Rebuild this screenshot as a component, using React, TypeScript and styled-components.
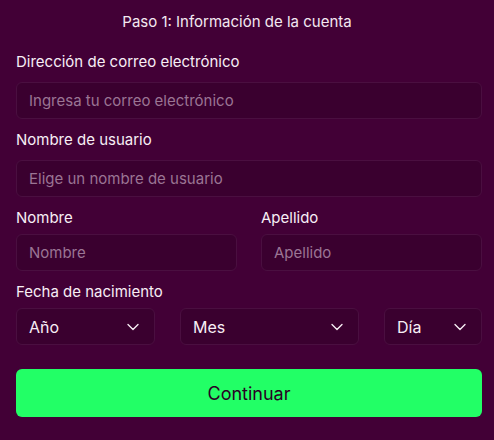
import React, { FC } from 'react'
import styled, { createGlobalStyle } from 'styled-components'
import { ChevronDown } from 'lucide-react'

const GlobalStyle = createGlobalStyle`
    html, body {
        margin: 0;
        padding: 0;
        background-color: #420036;
    }
    body {
        font-family: Inter, "Noto Sans", sans-serif;
        color: #f7eef5;
    }
`

const Form = styled.form`
    width: 494px;
    height: 440px;
    box-sizing: border-box;
    padding: 12px 12px 0 16px;
    background-color: #420036;
`

const Title = styled.div`
    font-size: 15px;
    line-height: 20px;
    text-align: center;
    padding-right: 24px;
    margin-bottom: 20px;
    color: #f3e8f1;
`

const Field = styled.div<{ $spaced?: boolean }>`
    display: flex;
    flex-direction: column;
    min-width: 0;
    margin-top: ${p => (p.$spaced ? '11px' : '0')};
`

const Label = styled.label<{ $tight?: boolean }>`
    font-size: 15px;
    line-height: 20px;
    margin-bottom: ${p => (p.$tight ? '6px' : '10px')};
    color: #f7eef5;
`

const TextInput = styled.input`
    width: 100%;
    min-width: 0;
    height: 37px;
    box-sizing: border-box;
    padding: 0 12px;
    border-radius: 6px;
    border: 1px solid #4a0f40;
    background-color: #3a002f;
    font-family: inherit;
    font-size: 15px;
    color: #f7eef5;
    outline: none;

    &::placeholder {
        color: #9b7594;
    }
`

const Row = styled.div<{ $cols: string; $flush?: boolean }>`
    display: grid;
    grid-template-columns: ${p => p.$cols};
    column-gap: ${p => (p.$flush ? '25px' : '24px')};
    margin-top: ${p => (p.$flush ? '0' : '11px')};
`

const Select = styled.button`
    height: 37px;
    min-width: 0;
    box-sizing: border-box;
    display: flex;
    align-items: center;
    justify-content: space-between;
    padding: 0 11px 0 12px;
    border-radius: 6px;
    border: 1px solid #4a0f40;
    background-color: #3a002f;
    font-family: inherit;
    font-size: 16px;
    color: #f7eef5;
    cursor: pointer;
`

const Button = styled.button`
    width: 100%;
    height: 48px;
    margin-top: 24px;
    border: none;
    border-radius: 6px;
    background-color: #22ff66;
    font-family: inherit;
    font-size: 18px;
    color: #2a0024;
    cursor: pointer;
`

const App: FC = () => {
    return (
        <>
            <GlobalStyle />
            <Form onSubmit={e => e.preventDefault()}>
                <Title>Paso 1: Información de la cuenta</Title>
                <Field>
                    <Label>Dirección de correo electrónico</Label>
                    <TextInput placeholder='Ingresa tu correo electrónico' />
                </Field>
                <Field $spaced>
                    <Label>Nombre de usuario</Label>
                    <TextInput placeholder='Elige un nombre de usuario' />
                </Field>
                <Row $cols='1fr 1fr'>
                    <Field>
                        <Label $tight>Nombre</Label>
                        <TextInput placeholder='Nombre' />
                    </Field>
                    <Field>
                        <Label $tight>Apellido</Label>
                        <TextInput placeholder='Apellido' />
                    </Field>
                </Row>
                <Field $spaced>
                    <Label $tight>Fecha de nacimiento</Label>
                    <Row $cols='139px 179px 1fr' $flush>
                        <Select type='button'>Año<ChevronDown size={20} strokeWidth={1.6} /></Select>
                        <Select type='button'>Mes<ChevronDown size={20} strokeWidth={1.6} /></Select>
                        <Select type='button'>Día<ChevronDown size={20} strokeWidth={1.6} /></Select>
                    </Row>
                </Field>
                <Button type='submit'>Continuar</Button>
            </Form>
        </>
    )
}

export default App
